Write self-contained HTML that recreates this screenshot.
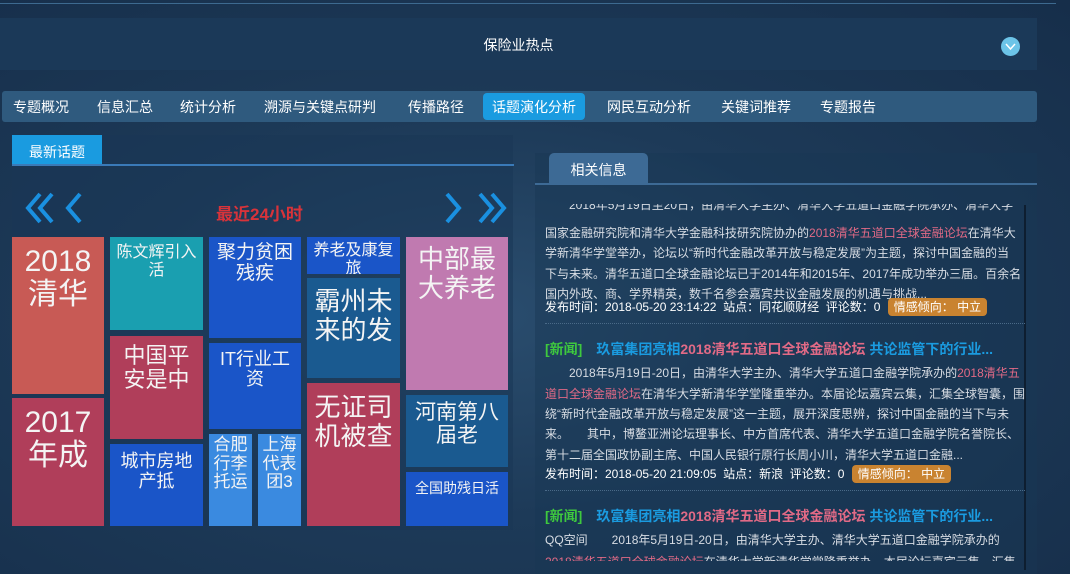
<!DOCTYPE html>
<html><head><meta charset="utf-8"><style>
*{margin:0;padding:0;box-sizing:border-box}
body{width:1070px;height:574px;overflow:hidden;position:relative;font-family:"Liberation Sans","Noto Sans CJK SC",sans-serif;color:#fff;
background:radial-gradient(ellipse at 45% 55%,#2a4d6e 0%,#1d3a58 45%,#162e4a 100%);}
.abs{position:absolute}
.hdr{left:0;top:18px;width:1037px;height:52px;background:#1b3958;}
.hdr span{position:absolute;left:0;right:0;top:17px;text-align:center;font-size:14px}
.nav{left:2px;top:91px;width:1035px;height:31px;background:#2f5a7e;border-radius:3px;}
.nav span{position:absolute;top:6px;font-size:14px;white-space:nowrap}
.nav .act{background:#1a9be0;border-radius:4px;top:2px;height:27px;padding:4px 9px 0}
.lp{left:12px;top:135px;width:501px;height:395px;background:rgba(25,55,85,.55)}
.tab{font-size:14px;text-align:center}
.tm{position:absolute;text-align:center;color:#f4f4f4;overflow:hidden;line-height:1.1}
.rt{font-size:12px;line-height:20.5px;color:#d8dde4;white-space:nowrap;position:absolute;left:545px}
.meta{font-size:12px;color:#fff;position:absolute;left:545px;white-space:nowrap}
.tag{background:#c98330;border-radius:4px;padding:2px 6px;margin-left:4px}
.pk{color:#e26a86}
.ttl{position:absolute;left:545px;font-size:14px;font-weight:bold;white-space:nowrap}
.dv{position:absolute;left:545px;width:480px;border-top:1px dotted #4a6a88}
</style></head><body>
<div class="abs" style="left:0;top:3px;width:1056px;height:1px;background:#3d6a90"></div>
<div class="abs hdr"><span>保险业热点</span></div>
<div class="abs" style="left:1001px;top:37px;width:19px;height:19px;border-radius:50%;background:#6cc4e8"><svg width="19" height="19"><polyline points="5,7 9.5,12 14,7" fill="none" stroke="#fff" stroke-width="1.5"/></svg></div>
<div class="abs nav">
<span style="left:11px">专题概况</span><span style="left:95px">信息汇总</span><span style="left:178px">统计分析</span><span style="left:262px">溯源与关键点研判</span><span style="left:406px">传播路径</span><span class="act" style="left:481px">话题演化分析</span><span style="left:605px">网民互动分析</span><span style="left:719px">关键词推荐</span><span style="left:818px">专题报告</span>
</div>
<div class="abs lp"></div>
<div class="abs tab" style="left:12px;top:135px;width:90px;height:30px;background:#1a9be0;padding-top:7px">最新话题</div>
<div class="abs" style="left:12px;top:164px;width:502px;height:2px;background:#3a7ab8"></div>
<svg class="abs" style="left:20px;top:188px" width="500" height="40">
<g fill="none" stroke="#1a90e0" stroke-width="4">
<polyline points="20,6 8,20 20,34"/><polyline points="32,6 20,20 32,34"/><polyline points="60,6 48,20 60,34"/>
<polyline points="427,6 439,20 427,34"/><polyline points="460,6 472,20 460,34"/><polyline points="472,6 484,20 472,34"/>
</g></svg>
<div class="abs" style="left:216px;top:200px;font-size:17px;font-weight:bold;color:#d8333a">最近24小时</div>

<div class="tm" style="left:12px;top:237px;width:92px;height:157px;background:#c85a55;font-size:30px;padding-top:8px">2018<br>清华</div>
<div class="tm" style="left:12px;top:398px;width:92px;height:128px;background:#b03e5a;font-size:30px;padding-top:8px">2017<br>年成</div>
<div class="tm" style="left:110px;top:237px;width:93px;height:93px;background:#1a9fb0;font-size:16px;padding-top:7px">陈文辉引入<br>活</div>
<div class="tm" style="left:110px;top:336px;width:93px;height:103px;background:#b03e5a;font-size:22px;padding-top:8px">中国平<br>安是中</div>
<div class="tm" style="left:110px;top:444px;width:93px;height:82px;background:#1a55c8;font-size:18px;padding-top:8px">城市房地<br>产抵</div>
<div class="tm" style="left:209px;top:237px;width:92px;height:101px;background:#1a55c8;font-size:19px;padding-top:6px">聚力贫困<br>残疾</div>
<div class="tm" style="left:209px;top:343px;width:92px;height:86px;background:#1a55c8;font-size:18px;padding-top:7px">IT行业工<br>资</div>
<div class="tm" style="left:209px;top:434px;width:43px;height:92px;background:#3a8ae0;font-size:17px;padding-top:2px">合肥<br>行李<br>托运</div>
<div class="tm" style="left:258px;top:434px;width:43px;height:92px;background:#3a8ae0;font-size:17px;padding-top:2px">上海<br>代表<br>团3</div>
<div class="tm" style="left:307px;top:237px;width:93px;height:37px;background:#1a55c8;font-size:16px;padding-top:5px">养老及康复<br>旅</div>
<div class="tm" style="left:307px;top:278px;width:93px;height:100px;background:#1a5a90;font-size:26px;padding-top:9px">霸州未<br>来的发</div>
<div class="tm" style="left:307px;top:383px;width:93px;height:143px;background:#b03e5a;font-size:26px;padding-top:10px">无证司<br>机被查</div>
<div class="tm" style="left:406px;top:237px;width:102px;height:153px;background:#c07ab0;font-size:26px;padding-top:8px">中部最<br>大养老</div>
<div class="tm" style="left:406px;top:395px;width:102px;height:72px;background:#1a5a90;font-size:21px;padding-top:6px">河南第八<br>届老</div>
<div class="tm" style="left:406px;top:472px;width:102px;height:54px;background:#1a55c8;font-size:14px;padding-top:9px">全国助残日活</div>

<div class="abs" style="left:535px;top:153px;width:502px;height:421px;background:rgba(25,55,85,.45)"></div>
<div class="abs tab" style="left:549px;top:153px;width:99px;height:30px;background:#3d6a95;border-radius:5px 5px 0 0;font-size:14px;padding-top:7px">相关信息</div>
<div class="abs" style="left:535px;top:183px;width:502px;height:2px;background:#3d6a95"></div>
<div class="abs" style="left:1024px;top:205px;width:2px;height:365px;background:#0e1e30"></div>

<div class="abs" style="left:545px;top:204px;width:480px;height:12px;overflow:hidden"><div class="rt" style="left:0;top:-9px">　　2018年5月19日至20日，由清华大学主办、清华大学五道口金融学院承办、清华大学</div></div>
<div class="rt" style="top:223px">国家金融研究院和清华大学金融科技研究院协办的<span class="pk">2018清华五道口全球金融论坛</span>在清华大</div>
<div class="rt" style="top:243px">学新清华学堂举办，论坛以“新时代金融改革开放与稳定发展”为主题，探讨中国金融的当</div>
<div class="rt" style="top:264px">下与未来。清华五道口全球金融论坛已于2014年和2015年、2017年成功举办三届。百余名</div>
<div class="rt" style="top:284px">国内外政、商、学界精英，数千名参会嘉宾共议金融发展的机遇与挑战...</div>
<div class="meta" style="top:298px">发布时间：2018-05-20 23:14:22 &nbsp;站点：同花顺财经 &nbsp;评论数：0 <span class="tag">情感倾向： 中立</span></div>
<div class="dv" style="top:323px"></div>
<div class="ttl" style="top:339px"><span style="color:#3ec93e">[新闻]</span>　<span style="color:#1a9be0">玖富集团亮相</span><span class="pk">2018清华五道口全球金融论坛</span> <span style="color:#1a9be0">共论监管下的行业...</span></div>
<div class="rt" style="top:363px">　　2018年5月19日-20日，由清华大学主办、清华大学五道口金融学院承办的<span class="pk">2018清华五</span></div>
<div class="rt" style="top:384px"><span class="pk">道口全球金融论坛</span>在清华大学新清华学堂隆重举办。本届论坛嘉宾云集，汇集全球智囊，围</div>
<div class="rt" style="top:404px">绕“新时代金融改革开放与稳定发展”这一主题，展开深度思辨，探讨中国金融的当下与未</div>
<div class="rt" style="top:424px">来。　　其中，博鳌亚洲论坛理事长、中方首席代表、清华大学五道口金融学院名誉院长、</div>
<div class="rt" style="top:445px">第十二届全国政协副主席、中国人民银行原行长周小川，清华大学五道口金融...</div>
<div class="meta" style="top:465px">发布时间：2018-05-20 21:09:05 &nbsp;站点：新浪 &nbsp;评论数：0 <span class="tag">情感倾向： 中立</span></div>
<div class="dv" style="top:490px"></div>
<div class="ttl" style="top:506px"><span style="color:#3ec93e">[新闻]</span>　<span style="color:#1a9be0">玖富集团亮相</span><span class="pk">2018清华五道口全球金融论坛</span> <span style="color:#1a9be0">共论监管下的行业...</span></div>
<div class="rt" style="top:530px">QQ空间　　2018年5月19日-20日，由清华大学主办、清华大学五道口金融学院承办的</div>
<div class="abs" style="left:545px;top:554px;width:480px;height:7px;overflow:hidden"><div class="rt" style="left:0;top:-2px"><span class="pk">2018清华五道口全球金融论坛</span>在清华大学新清华学堂隆重举办。本届论坛嘉宾云集，汇集</div></div>
</body></html>
